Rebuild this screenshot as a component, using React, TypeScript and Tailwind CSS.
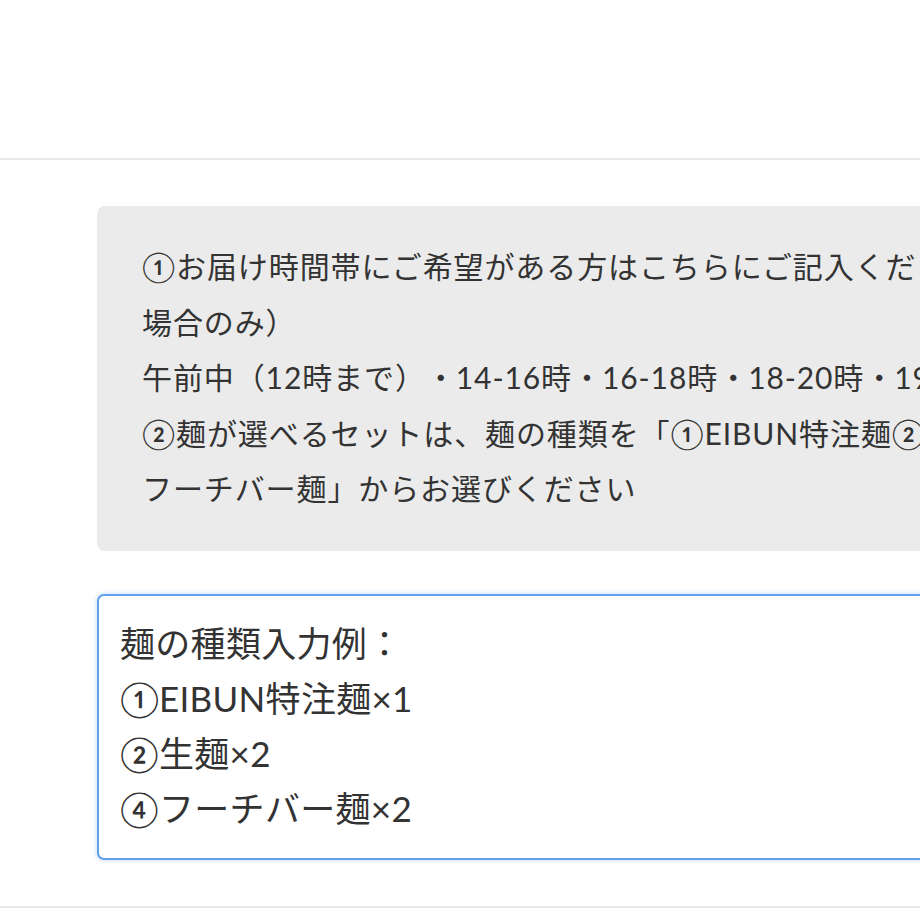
import React from "react";

function Dot() {
  return <span className="inline-block w-[1em] text-center">・</span>;
}

export default function App() {
  const font = { fontFamily: 'Lato, "Noto Sans CJK JP", sans-serif' };
  return (
    <div className="w-[920px] h-[920px] overflow-hidden bg-white" style={font}>
      <div className="h-[158px]" />
      <div className="h-[2px] bg-[#e8e8e8]" />
      <div className="pl-[97px] pt-[46px]">
        <div className="w-[1100px] rounded-[8px] bg-[#ebebeb] pl-[45px] pt-[33px] pb-[34px] text-[30px] tracking-[0.9px] leading-[55.5px] text-[#333333] whitespace-nowrap">
          <div>①お届け時間帯にご希望がある方はこちらにご記入ください（日時指定の</div>
          <div>場合のみ）</div>
          <div>
            午前中（12時まで）<Dot />14-16時<Dot />16-18時<Dot />18-20時<Dot />19-21時
          </div>
          <div>②麺が選べるセットは、麺の種類を「①EIBUN特注麺②生麺③乾麺④</div>
          <div>フーチバー麺」からお選びください</div>
        </div>
        <div className="mt-[43px] w-[1100px] h-[266px] rounded-[7px] border-2 border-[#62a0e8] shadow-[0_0_4px_1px_rgba(98,160,232,0.3)] bg-white pl-[21px] pt-[20px] text-[35px] tracking-[0.3px] leading-[55px] text-[#333333] whitespace-nowrap">
          <div>麺の種類入力例：</div>
          <div>①EIBUN特注麺×1</div>
          <div>②生麺×2</div>
          <div>④フーチバー麺×2</div>
        </div>
      </div>
      <div className="mt-[46px] h-[2px] bg-[#e8e8e8]" />
    </div>
  );
}
